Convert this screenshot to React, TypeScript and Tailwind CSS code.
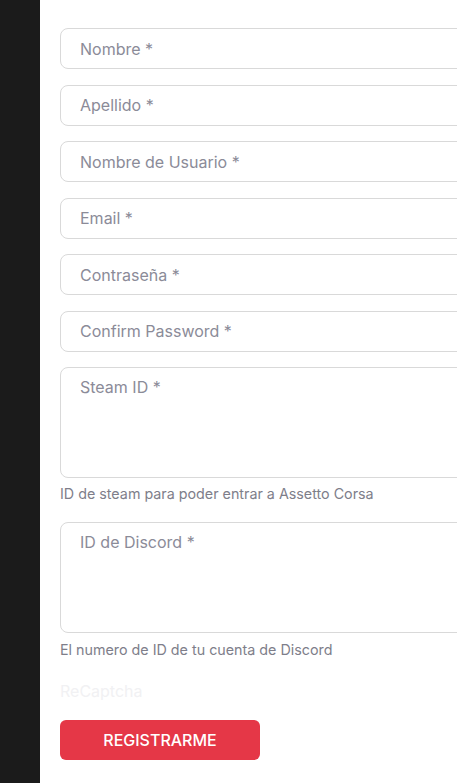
export default function App() {
  const inputs = [
    "Nombre *",
    "Apellido *",
    "Nombre de Usuario *",
    "Email *",
    "Contraseña *",
    "Confirm Password *",
  ];

  return (
    <div className="flex min-h-[783px] w-[457px] overflow-hidden bg-white font-['Inter','Noto_Sans',sans-serif]">
      {/* barra lateral oscura */}
      <div className="w-10 shrink-0 bg-[#1b1b1b]" />

      <form className="flex w-[480px] shrink-0 flex-col pl-5 pt-7">
        {inputs.map((p) => (
          <input
            key={p}
            placeholder={p}
            className="mb-[15.5px] h-[41px] w-full rounded-lg border border-[#d9d9d9] px-[19px] text-base text-[#3a3a46] outline-none placeholder:text-[#8b8b98]"
          />
        ))}

        <textarea
          placeholder="Steam ID *"
          className="h-[111px] w-full resize-none rounded-lg border border-[#d9d9d9] px-[19px] py-[7px] text-base text-[#3a3a46] outline-none placeholder:text-[#8b8b98]"
        />
        <p className="mt-[6px] mb-[18px] text-[14.3px] leading-5 text-[#7e7e8a]">
          ID de steam para poder entrar a Assetto Corsa
        </p>

        <textarea
          placeholder="ID de Discord *"
          className="h-[111px] w-full resize-none rounded-lg border border-[#d9d9d9] px-[19px] py-[7px] text-base text-[#3a3a46] outline-none placeholder:text-[#8b8b98]"
        />
        <p className="mt-[7px] text-[14.3px] leading-5 text-[#7e7e8a]">
          El numero de ID de tu cuenta de Discord
        </p>

        <p className="mt-[21px] text-base leading-5 text-[#f1f1f3]">ReCaptcha</p>

        <button
          type="button"
          className="mt-[19px] h-10 w-[200px] rounded-md bg-[#e53747] text-base font-medium text-white"
        >
          REGISTRARME
        </button>
      </form>
    </div>
  );
}
